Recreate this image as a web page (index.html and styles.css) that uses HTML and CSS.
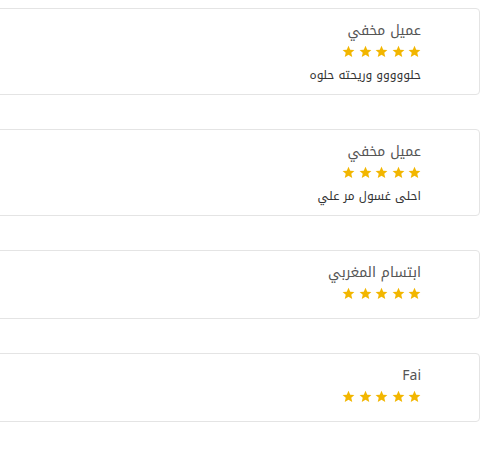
FILE: index.html
```html
<!DOCTYPE html>
<html lang="ar" dir="rtl">
<head>
<meta charset="utf-8">
<link rel="stylesheet" href="styles.css">
</head>
<body>
<div class="list">
  <div class="card">
    <div class="name">عميل مخفي</div>
    <div class="stars">
      <svg viewBox="0 0 24 24"><path d="M12 1.5l3.2 7.1 7.7.7-5.8 5.1 1.8 7.6L12 18l-6.9 4 1.8-7.6-5.8-5.1 7.7-.7z"/></svg>
      <svg viewBox="0 0 24 24"><path d="M12 1.5l3.2 7.1 7.7.7-5.8 5.1 1.8 7.6L12 18l-6.9 4 1.8-7.6-5.8-5.1 7.7-.7z"/></svg>
      <svg viewBox="0 0 24 24"><path d="M12 1.5l3.2 7.1 7.7.7-5.8 5.1 1.8 7.6L12 18l-6.9 4 1.8-7.6-5.8-5.1 7.7-.7z"/></svg>
      <svg viewBox="0 0 24 24"><path d="M12 1.5l3.2 7.1 7.7.7-5.8 5.1 1.8 7.6L12 18l-6.9 4 1.8-7.6-5.8-5.1 7.7-.7z"/></svg>
      <svg viewBox="0 0 24 24"><path d="M12 1.5l3.2 7.1 7.7.7-5.8 5.1 1.8 7.6L12 18l-6.9 4 1.8-7.6-5.8-5.1 7.7-.7z"/></svg>
    </div>
    <div class="comment">حلووووو وريحته حلوه</div>
  </div>
  <div class="card">
    <div class="name">عميل مخفي</div>
    <div class="stars">
      <svg viewBox="0 0 24 24"><path d="M12 1.5l3.2 7.1 7.7.7-5.8 5.1 1.8 7.6L12 18l-6.9 4 1.8-7.6-5.8-5.1 7.7-.7z"/></svg>
      <svg viewBox="0 0 24 24"><path d="M12 1.5l3.2 7.1 7.7.7-5.8 5.1 1.8 7.6L12 18l-6.9 4 1.8-7.6-5.8-5.1 7.7-.7z"/></svg>
      <svg viewBox="0 0 24 24"><path d="M12 1.5l3.2 7.1 7.7.7-5.8 5.1 1.8 7.6L12 18l-6.9 4 1.8-7.6-5.8-5.1 7.7-.7z"/></svg>
      <svg viewBox="0 0 24 24"><path d="M12 1.5l3.2 7.1 7.7.7-5.8 5.1 1.8 7.6L12 18l-6.9 4 1.8-7.6-5.8-5.1 7.7-.7z"/></svg>
      <svg viewBox="0 0 24 24"><path d="M12 1.5l3.2 7.1 7.7.7-5.8 5.1 1.8 7.6L12 18l-6.9 4 1.8-7.6-5.8-5.1 7.7-.7z"/></svg>
    </div>
    <div class="comment">احلى غسول مر علي</div>
  </div>
  <div class="card">
    <div class="name">ابتسام المغربي</div>
    <div class="stars">
      <svg viewBox="0 0 24 24"><path d="M12 1.5l3.2 7.1 7.7.7-5.8 5.1 1.8 7.6L12 18l-6.9 4 1.8-7.6-5.8-5.1 7.7-.7z"/></svg>
      <svg viewBox="0 0 24 24"><path d="M12 1.5l3.2 7.1 7.7.7-5.8 5.1 1.8 7.6L12 18l-6.9 4 1.8-7.6-5.8-5.1 7.7-.7z"/></svg>
      <svg viewBox="0 0 24 24"><path d="M12 1.5l3.2 7.1 7.7.7-5.8 5.1 1.8 7.6L12 18l-6.9 4 1.8-7.6-5.8-5.1 7.7-.7z"/></svg>
      <svg viewBox="0 0 24 24"><path d="M12 1.5l3.2 7.1 7.7.7-5.8 5.1 1.8 7.6L12 18l-6.9 4 1.8-7.6-5.8-5.1 7.7-.7z"/></svg>
      <svg viewBox="0 0 24 24"><path d="M12 1.5l3.2 7.1 7.7.7-5.8 5.1 1.8 7.6L12 18l-6.9 4 1.8-7.6-5.8-5.1 7.7-.7z"/></svg>
    </div>
  </div>
  <div class="card">
    <div class="name">Fai</div>
    <div class="stars">
      <svg viewBox="0 0 24 24"><path d="M12 1.5l3.2 7.1 7.7.7-5.8 5.1 1.8 7.6L12 18l-6.9 4 1.8-7.6-5.8-5.1 7.7-.7z"/></svg>
      <svg viewBox="0 0 24 24"><path d="M12 1.5l3.2 7.1 7.7.7-5.8 5.1 1.8 7.6L12 18l-6.9 4 1.8-7.6-5.8-5.1 7.7-.7z"/></svg>
      <svg viewBox="0 0 24 24"><path d="M12 1.5l3.2 7.1 7.7.7-5.8 5.1 1.8 7.6L12 18l-6.9 4 1.8-7.6-5.8-5.1 7.7-.7z"/></svg>
      <svg viewBox="0 0 24 24"><path d="M12 1.5l3.2 7.1 7.7.7-5.8 5.1 1.8 7.6L12 18l-6.9 4 1.8-7.6-5.8-5.1 7.7-.7z"/></svg>
      <svg viewBox="0 0 24 24"><path d="M12 1.5l3.2 7.1 7.7.7-5.8 5.1 1.8 7.6L12 18l-6.9 4 1.8-7.6-5.8-5.1 7.7-.7z"/></svg>
    </div>
  </div>
</div>
</body>
</html>
```
FILE: styles.css
```css
html, body {
  margin: 0;
  padding: 0;
  background: #ffffff;
}
body {
  font-family: "Noto Kufi Arabic", "Noto Sans Arabic UI", "Noto Sans Arabic", "Noto Sans", "DejaVu Sans", sans-serif;
  color: #444;
}
.list {
  direction: rtl;
  overflow: hidden;
  padding: 8px 20px 0 0;
  display: flex;
  flex-direction: column;
  align-items: flex-start;
  gap: 34px;
}
.card {
  flex: none;
  width: 600px;
  box-sizing: border-box;
  border: 1px solid #e4e4e4;
  border-radius: 4px;
  padding: 10px 58px 9px 15px;
  display: flex;
  flex-direction: column;
  align-items: flex-start;
}
.name {
  font-size: 14px;
  line-height: 24px;
  height: 24px;
  color: #555;
}
.stars {
  display: flex;
  gap: 3.5px;
  height: 14px;
  align-items: center;
  margin: 1px 0 7px;
}
.stars:last-child {
  margin-bottom: 9px;
}
.stars svg {
  width: 13px;
  height: 13px;
  fill: #f2b600;
}
.comment {
  font-size: 12px;
  line-height: 20px;
  height: 20px;
  color: #333;
}
```
